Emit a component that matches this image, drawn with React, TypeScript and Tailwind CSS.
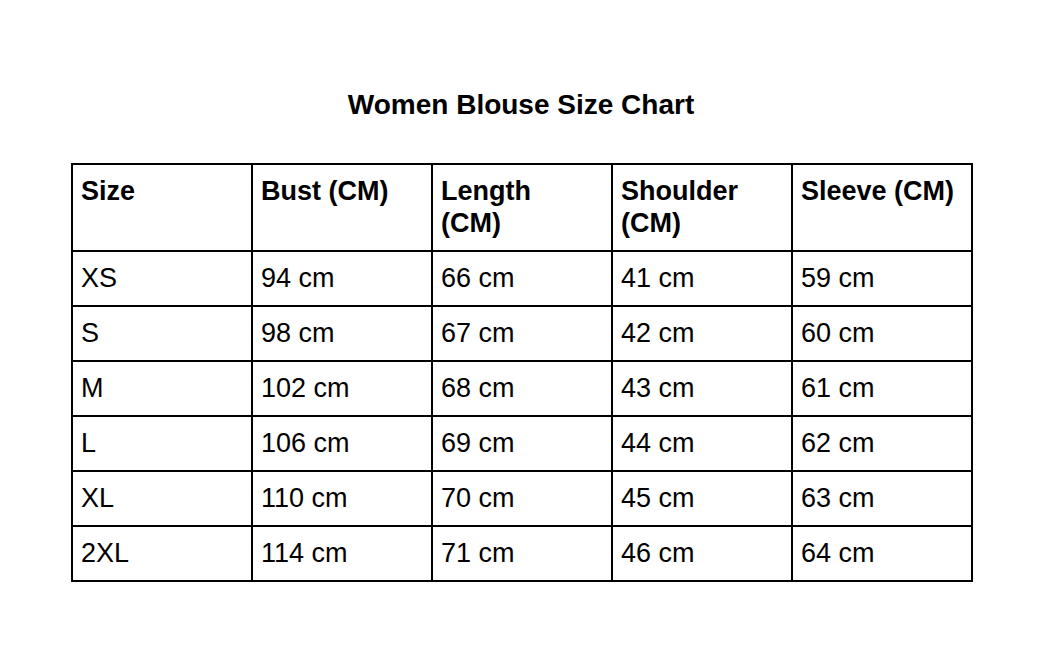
const headers = ['Size', 'Bust (CM)', 'Length|(CM)', 'Shoulder|(CM)', 'Sleeve (CM)']

const rows = [
  ['XS', '94 cm', '66 cm', '41 cm', '59 cm'],
  ['S', '98 cm', '67 cm', '42 cm', '60 cm'],
  ['M', '102 cm', '68 cm', '43 cm', '61 cm'],
  ['L', '106 cm', '69 cm', '44 cm', '62 cm'],
  ['XL', '110 cm', '70 cm', '45 cm', '63 cm'],
  ['2XL', '114 cm', '71 cm', '46 cm', '64 cm'],
]

export default function App() {
  return (
    <div className="h-[658px] w-full bg-white pt-[89px] text-black" style={{ fontFamily: '"Liberation Sans", Arial, sans-serif' }}>
      <h1 className="pr-[4px] text-center text-[28px] font-bold leading-[32px]">Women Blouse Size Chart</h1>
      <div className="ml-[71px] mt-[42px] grid w-[902px] grid-cols-[repeat(5,180px)] border-l-2 border-t-2 border-black">
        {headers.map((h) => (
          <div key={h} className="h-[87px] border-b-2 border-r-2 border-black pl-[8px] pr-2 pt-[10px] text-[27px] font-bold leading-[32px]">
            {h.split('|').map((part, i) => (
              <div key={i}>{part}</div>
            ))}
          </div>
        ))}
        {rows.map((r) =>
          r.map((c, i) => (
            <div key={r[0] + i} className="flex h-[55px] items-center border-b-2 border-r-2 border-black pl-[8px] text-[27px] leading-[31px]">
              {c}
            </div>
          ))
        )}
      </div>
    </div>
  )
}
